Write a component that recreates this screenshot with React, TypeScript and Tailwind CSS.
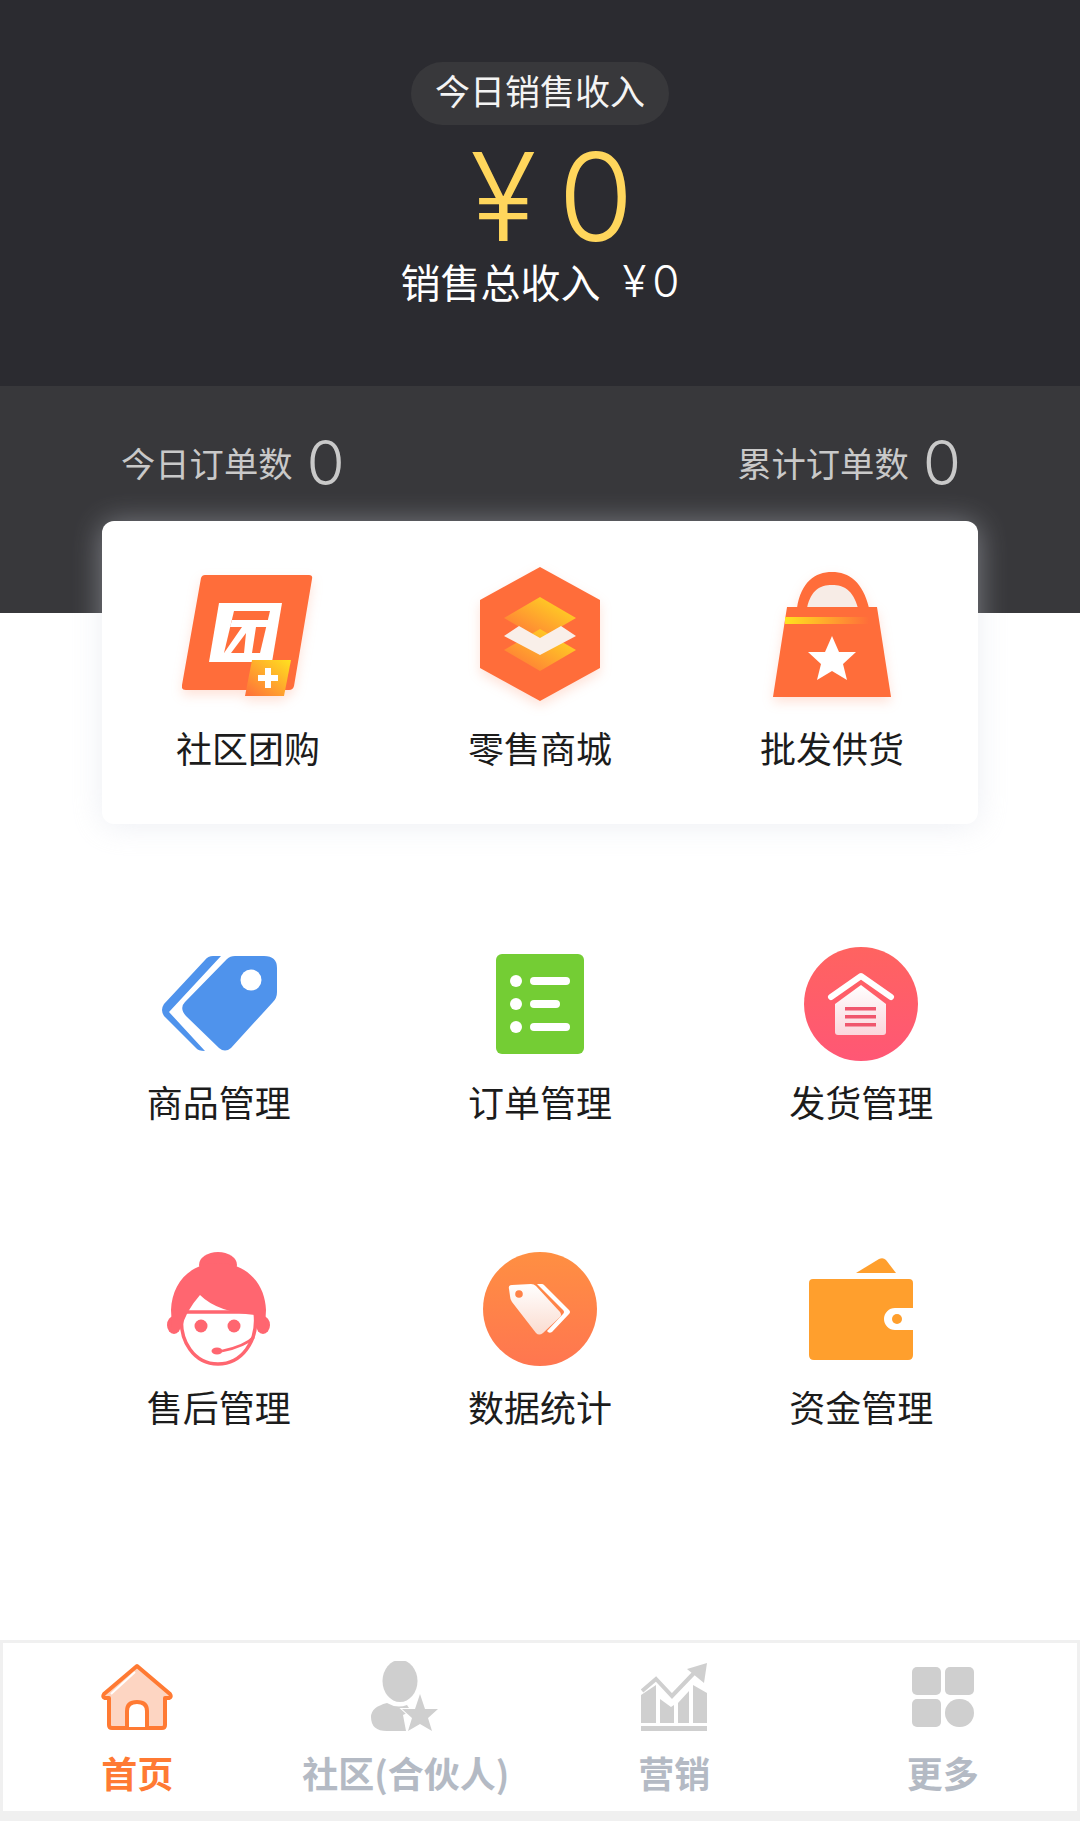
import type { ReactNode } from "react";

const font = "font-['Noto_Sans_CJK_SC','Noto_Sans',sans-serif]";
const digits = "font-['Inter',sans-serif]";

const GroupBuyIcon = () => (
  <svg width="132" height="124" viewBox="0 0 132 124" className="drop-shadow-[0_5px_6px_rgba(255,109,58,0.2)]">
    <defs>
      <linearGradient id="plus-bg" x1="1" y1="0" x2="0" y2="1">
        <stop offset="0" stopColor="#ffe21f" />
        <stop offset="1" stopColor="#ff6d3a" />
      </linearGradient>
    </defs>
    <path d="M19 3 Q20 0 23 0 H127 Q131 0 130 4 L112 111 Q111 115 107 115 H4 Q-1 115 0 110 Z" fill="#ff6d3a" />
    <path d="M37 28 H100 L90 87 H27 Z" fill="#fff" />
    <path d="M52 36 H88 L78 78 H42 Z" fill="#ff6d3a" />
    <path d="M50 45 H87 L86 52 H74 L70 78 H62 L64 58 L49 78 H42 L60 52 H48 Z" fill="#fff" />
    <path d="M70 85 H109 L102 121 H63 Z" fill="url(#plus-bg)" />
    <path d="M83 93 H89 V100 H96 V106 H89 V113 H83 V106 H76 V100 H83 Z" fill="#fff" />
  </svg>
);

const StoreIcon = () => (
  <svg width="120" height="134" viewBox="0 0 120 134" className="mb-[6px] drop-shadow-[0_5px_6px_rgba(255,109,58,0.2)]">
    <defs>
      <linearGradient id="layer" x1="1" y1="0" x2="0" y2="1">
        <stop offset="0" stopColor="#ffe21f" />
        <stop offset="1" stopColor="#ff6d3a" />
      </linearGradient>
    </defs>
    <path d="M60 0 L120 33 V101 L60 134 L0 101 V33 Z" fill="#ff6d3a" />
    <path d="M60 30 L96 51 L60 72 L24 51 Z" fill="url(#layer)" />
    <path d="M60 62 L96 83 L60 104 L24 83 Z" fill="url(#layer)" />
    <path d="M39 59 L60 71 L81 59 L96 69 L60 88 L24 69 Z" fill="#f9efe9" />
  </svg>
);

const BagIcon = () => (
  <svg width="118" height="126" viewBox="0 0 118 126" className="mb-[4px] drop-shadow-[0_5px_6px_rgba(255,109,58,0.2)]">
    <defs>
      <linearGradient id="strip" x1="0" y1="0" x2="1" y2="0">
        <stop offset="0" stopColor="#ffe21f" />
        <stop offset="1" stopColor="#ff6d3a" />
      </linearGradient>
    </defs>
    <path d="M34 36 C38 18 47 12 59 12 C71 12 80 18 85 36 Z" fill="#f7ece6" />
    <path d="M24 36 C28 10 42 0 59 0 C76 0 90 10 96 36 H85 C80 18 71 13 59 13 C47 13 38 18 34 36 Z" fill="#ff6d3a" />
    <path d="M14 35 H104 L118 125 H0 Z" fill="#ff6d3a" />
    <rect x="12" y="45" width="84" height="7" fill="url(#strip)" />
    <path d="M59 64 L66 80 L83 80 L70 92 L74 108 L59 99 L44 108 L48 92 L35 80 L52 80 Z" fill="#fff" />
  </svg>
);

const TagIcon = () => (
  <svg width="116" height="96" viewBox="0 0 116 96">
    <path d="M60 0 H52 Q47 0 44 4 L3 48 Q-1 54 3 60 L35 92 Q37 95 44 95 L8 56 Z" fill="#4f93ec" />
    <path d="M74 0 H103 Q116 0 116 12 V36 Q116 42 112 46 L70 92 Q64 97 58 92 L25 60 Q18 52 24 46 L66 3 Q69 0 74 0 Z" fill="#4f93ec" />
    <circle cx="90" cy="24" r="10.5" fill="#fff" />
  </svg>
);

const ListIcon = () => (
  <svg width="88" height="100" viewBox="0 0 88 100">
    <rect width="88" height="100" rx="6" fill="#74cd34" />
    <circle cx="20" cy="27" r="6" fill="#fff" />
    <rect x="34" y="23" width="40" height="8" rx="4" fill="#fff" />
    <circle cx="20" cy="50" r="6" fill="#fff" />
    <rect x="34" y="46" width="30" height="8" rx="4" fill="#fff" />
    <circle cx="20" cy="73" r="6" fill="#fff" />
    <rect x="34" y="69" width="40" height="8" rx="4" fill="#fff" />
  </svg>
);

const ShipIcon = () => (
  <svg width="114" height="114" viewBox="0 0 114 114">
    <defs>
      <linearGradient id="ship-bg" x1="0" y1="0" x2="0" y2="1">
        <stop offset="0" stopColor="#ff6360" />
        <stop offset="1" stopColor="#ff5775" />
      </linearGradient>
      <linearGradient id="ship-box" x1="0" y1="0" x2="0" y2="1">
        <stop offset="0" stopColor="#fff" />
        <stop offset="1" stopColor="#fbd6dc" />
      </linearGradient>
    </defs>
    <circle cx="57" cy="57" r="57" fill="url(#ship-bg)" />
    <path d="M27 50 L57 29 L87 50" fill="none" stroke="#fff" strokeWidth="6" strokeLinecap="round" strokeLinejoin="round" />
    <path d="M57 38 L82 57 V85 Q82 88 79 88 H34 Q31 88 31 85 V57 Z" fill="url(#ship-box)" />
    <rect x="41" y="60" width="31" height="3.5" fill="#f0566d" />
    <rect x="41" y="68" width="31" height="3.5" fill="#f0566d" />
    <rect x="41" y="76" width="31" height="3.5" fill="#f0566d" />
  </svg>
);

const ServiceIcon = () => (
  <svg width="104" height="114" viewBox="0 0 104 114">
    <path d="M15 60 C11 90 28 112 51 112 C74 112 92 90 88 60 Z" fill="#fff" stroke="#ff6670" strokeWidth="3.5" />
    <ellipse cx="51" cy="13" rx="19" ry="13" fill="#ff6670" />
    <ellipse cx="7" cy="73" rx="7" ry="9" fill="#ff6670" />
    <ellipse cx="96" cy="73" rx="7" ry="9" fill="#ff6670" />
    <path d="M51 11 C22 11 5 32 4 58 L5 76 H15 Q18 60 33 43 Q50 60 88 63 L90 76 H98 L99 58 C98 32 80 11 51 11 Z" fill="#ff6670" />
    <circle cx="34" cy="74" r="6.5" fill="#ff6670" />
    <circle cx="67" cy="74" r="6.5" fill="#ff6670" />
    <path d="M87 85 C80 92 70 96 55 99" fill="none" stroke="#ff6670" strokeWidth="2.5" />
    <ellipse cx="50" cy="99" rx="5.5" ry="3.5" fill="#ff6670" />
  </svg>
);

const StatsIcon = () => (
  <svg width="114" height="114" viewBox="0 0 114 114">
    <defs>
      <linearGradient id="stats-bg" x1="0" y1="0" x2="0" y2="1">
        <stop offset="0" stopColor="#ff8f42" />
        <stop offset="1" stopColor="#ff7650" />
      </linearGradient>
      <linearGradient id="stats-tag" x1="0" y1="0" x2="0" y2="1">
        <stop offset="0" stopColor="#fff" />
        <stop offset="1" stopColor="#fbdcd0" />
      </linearGradient>
    </defs>
    <circle cx="57" cy="57" r="57" fill="url(#stats-bg)" />
    <path d="M26 37 Q25 33 29 33 L48 32 Q51 32 53 34 L77 60 Q79 63 77 65 L60 81 Q56 84 53 81 L29 50 Q27 47 27 44 Z" fill="url(#stats-tag)" />
    <path d="M54 32 H59 Q60 32 61 33 L86 58 Q88 60 86 62 L69 80 Q66 82 64 79 L80 62 Q82 60 80 58 Z" fill="#fff" />
    <circle cx="36" cy="42" r="3.8" fill="#ff8248" />
  </svg>
);

const WalletIcon = () => (
  <svg width="104" height="102" viewBox="0 0 104 102">
    <path d="M47 15 L70 1 Q74 -1 77 2 L87 15 Z" fill="#ff9f2d" />
    <path d="M4 21 H100 Q104 21 104 25 V50 H86 A11 11 0 0 0 86 72 H104 V97 Q104 102 99 102 H5 Q0 102 0 97 V25 Q0 21 4 21 Z" fill="#ff9f2d" />
    <circle cx="88" cy="61" r="5" fill="#ff9f2d" />
  </svg>
);

const HomeTabIcon = () => (
  <svg width="74" height="68" viewBox="0 0 74 68">
    <path d="M37 3 L70 31 Q72 34 69 35 L65 35 V62 Q65 65 62 65 H12 Q9 65 9 62 V35 L5 35 Q2 34 4 31 Z" fill="#fdd5c2" stroke="#ff7a33" strokeWidth="4" strokeLinejoin="round" />
    <path d="M35 9 L11 31" fill="none" stroke="#fff" strokeWidth="2" />
    <path d="M27 64 V48 Q27 39 37 39 Q47 39 47 48 V64" fill="#fff" stroke="#ff7a33" strokeWidth="4" />
  </svg>
);

const CommunityTabIcon = () => (
  <svg width="70" height="72" viewBox="0 0 70 72">
    <ellipse cx="29" cy="20" rx="17.5" ry="21" fill="#cfcfcf" />
    <path d="M16 42 Q26 48 36 44 L40 50 L32 54 L35 70 H16 Q0 70 0 56 Q0 46 16 42 Z" fill="#cfcfcf" />
    <path d="M49 33 L54 48 L67 48 L57 57 L61 70 L49 63 L37 70 L41 57 L31 48 L44 48 Z" fill="#cfcfcf" stroke="#fff" strokeWidth="2" paintOrder="stroke" />
  </svg>
);

const MarketTabIcon = () => (
  <svg width="66" height="68" viewBox="0 0 66 68">
    <path d="M0 60 V32 L15 22 V60 Z M19 60 V36 L30 44 L33 42 V60 Z M37 60 V40 L48 28 V60 Z M52 60 V22 L66 30 V60 Z" fill="#cfcfcf" />
    <path d="M1 28 L15 16 L31 33 L53 10" fill="none" stroke="#cfcfcf" strokeWidth="4" />
    <path d="M46 6 L66 0 L63 20 Z" fill="#cfcfcf" />
    <rect y="63" width="66" height="5" fill="#cfcfcf" />
  </svg>
);

const MoreTabIcon = () => (
  <div className="grid h-[60px] w-[62px] grid-cols-2 gap-[4px]">
    <div className="rounded-[5px] bg-[#cfcfcf]" />
    <div className="rounded-[5px] bg-[#cfcfcf]" />
    <div className="rounded-[5px] bg-[#cfcfcf]" />
    <div className="rounded-full bg-[#cfcfcf]" />
  </div>
);

const MenuItem = ({
  icon,
  label,
  labelClass,
}: {
  icon: ReactNode;
  label: string;
  labelClass: string;
}) => (
  <div className="flex flex-col items-center">
    <div className="flex h-[134px] items-center justify-center">{icon}</div>
    <span className={`text-[36px] leading-[50px] text-[#1c1c1c] ${labelClass}`}>
      {label}
    </span>
  </div>
);

const TabItem = ({
  icon,
  label,
  active,
}: {
  icon: ReactNode;
  label: string;
  active?: boolean;
}) => (
  <div className="flex flex-col items-center">
    <div className="flex h-[76px] items-center justify-center">{icon}</div>
    <span
      className={`mt-[12px] text-[36px] leading-[50px] font-bold ${active ? "text-[#ff7a33]" : "text-[#b4bac4]"}`}
    >
      {label}
    </span>
  </div>
);

export default function App() {
  return (
    <div className={`flex h-[1821px] w-[1080px] flex-col overflow-hidden bg-white ${font}`}>
      {/* Sales */}
      <div className="flex h-[386px] flex-col items-center bg-[#2b2b30] pt-[62px]">
        <div className="flex h-[63px] w-[258px] items-center justify-center rounded-[32px] bg-[#38383b] pb-[6px] text-[35px] text-[#f4f4f4]">
          今日销售收入
        </div>
        <div className={`mt-[17px] ml-[24px] flex h-[110px] items-center text-[122px] leading-[110px] font-light text-[#ffd65c] ${digits}`}>
          <span>¥</span>
          <span className="ml-[22px]">0</span>
        </div>
        <div className="flex items-center text-[40px] leading-[58px] text-white">
          <span>销售总收入</span>
          <span className={`ml-[22px] text-[44px] font-light ${digits}`}>¥</span>
          <span className={`ml-[6px] text-[44px] font-light ${digits}`}>0</span>
        </div>
      </div>

      {/* Orders + card */}
      <div className="h-[227px] bg-[#38383b] px-[102px]">
        <div className="flex h-[135px] items-center justify-between pt-[18px] pr-[17px] pl-[19px] text-[34.3px] text-[#c9c9c9]">
          <div className="flex items-center">
            <span>今日订单数</span>
            <span className={`ml-[14px] text-[62px] leading-none font-light ${digits}`}>0</span>
          </div>
          <div className="flex items-center">
            <span>累计订单数</span>
            <span className={`ml-[14px] text-[62px] leading-none font-light ${digits}`}>0</span>
          </div>
        </div>
        <div className="grid h-[303px] w-[876px] grid-cols-3 rounded-[12px] bg-white pt-[49px] shadow-[0_2px_30px_rgba(215,220,230,0.45)]">
          <MenuItem icon={<GroupBuyIcon />} label="社区团购" labelClass="mt-[18px]" />
          <MenuItem icon={<StoreIcon />} label="零售商城" labelClass="mt-[18px]" />
          <MenuItem icon={<BagIcon />} label="批发供货" labelClass="mt-[18px]" />
        </div>
      </div>

      {/* Management */}
      <div className="mt-[324px] grid grid-cols-3 gap-y-[116px] px-[58px]">
        <MenuItem icon={<TagIcon />} label="商品管理" labelClass="mt-[5px]" />
        <MenuItem icon={<ListIcon />} label="订单管理" labelClass="mt-[5px]" />
        <MenuItem icon={<ShipIcon />} label="发货管理" labelClass="mt-[5px]" />
        <MenuItem icon={<ServiceIcon />} label="售后管理" labelClass="mt-[5px]" />
        <MenuItem icon={<StatsIcon />} label="数据统计" labelClass="mt-[5px]" />
        <MenuItem icon={<WalletIcon />} label="资金管理" labelClass="mt-[5px]" />
      </div>

      {/* Tab bar */}
      <div className="mt-auto grid h-[181px] grid-cols-4 border-[3px] border-b-[10px] border-[#f0f0f0] pt-[16px]">
        <TabItem icon={<HomeTabIcon />} label="首页" active />
        <TabItem icon={<CommunityTabIcon />} label="社区(合伙人)" />
        <TabItem icon={<MarketTabIcon />} label="营销" />
        <TabItem icon={<MoreTabIcon />} label="更多" />
      </div>
    </div>
  );
}
